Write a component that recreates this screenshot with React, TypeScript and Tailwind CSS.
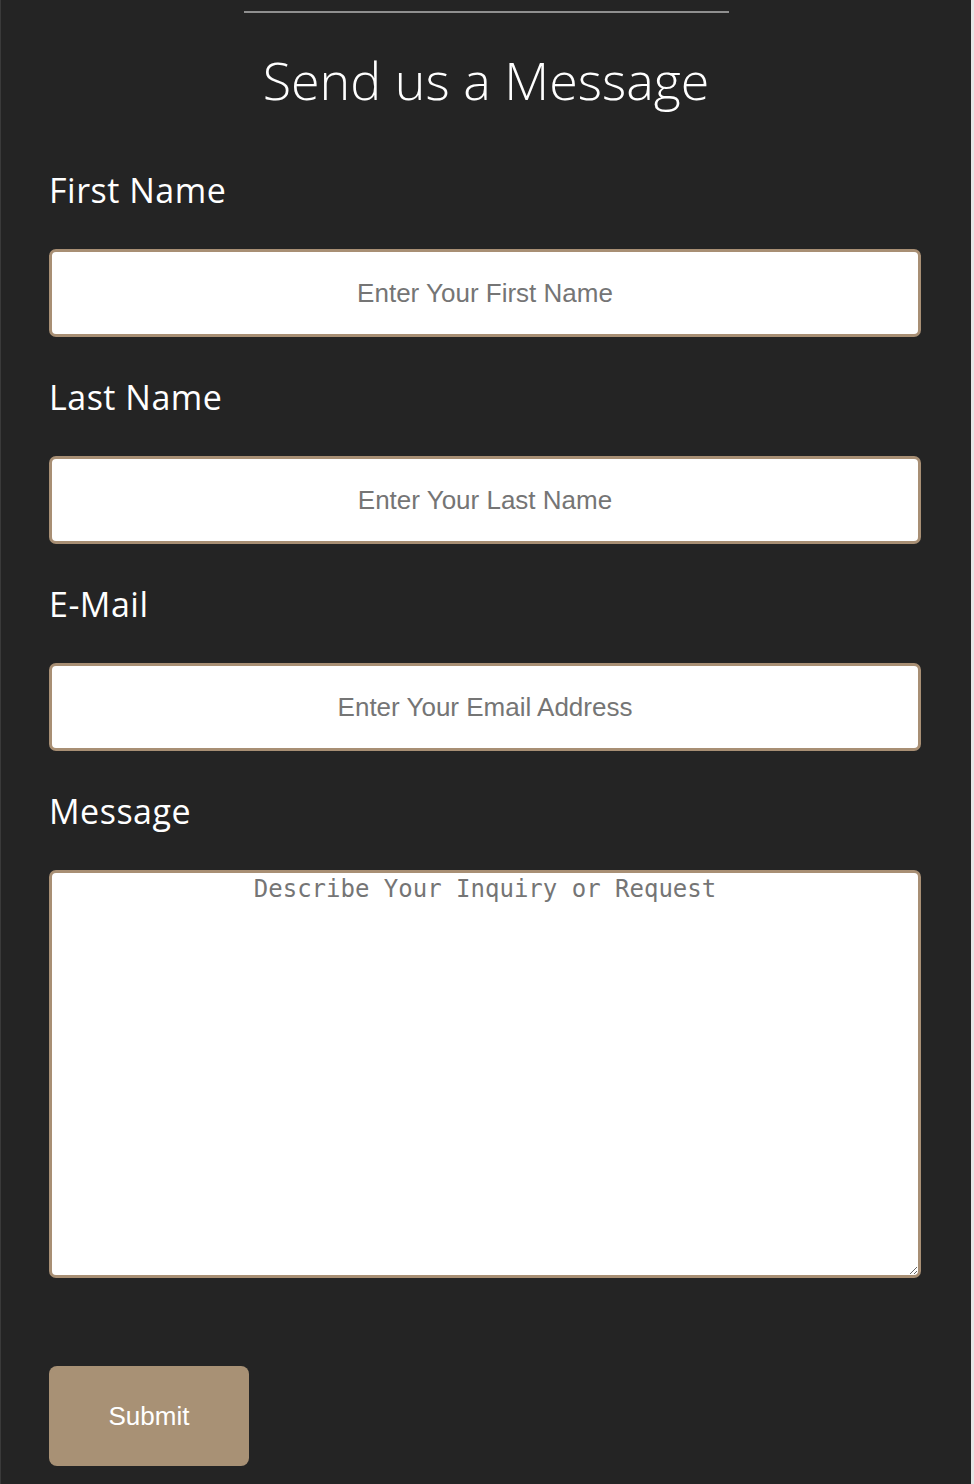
import React from 'react';

const labelFont = { fontFamily: '"Open Sans", "Noto Sans", sans-serif' };

interface FieldProps {
  label: string;
  placeholder: string;
  type?: string;
}

function Field({ label, placeholder, type = 'text' }: FieldProps) {
  return (
    <div className="flex flex-col">
      <label className="h-[40px] text-[34px] leading-[40px] tracking-[0.5px] text-white font-['Open_Sans',sans-serif]">
        {label}
      </label>
      <input
        type={type}
        placeholder={placeholder}
        className="mt-[39px] mb-[40px] h-[88px] w-full rounded-[7px] border-[3px] border-[#a88f74] bg-white text-center text-[26px] text-[#333] placeholder:text-[#757575] font-['Liberation_Sans',Arial,sans-serif] outline-none"
      />
    </div>
  );
}

export default function App() {
  return (
    <div className="flex min-h-[1484px] w-full bg-[#e6e6e6]">
      <div className="w-[971px] border-l border-[#3a3a3a] bg-[#242424]">
        <div className="mx-auto mt-[11px] h-[2px] w-[485px] bg-[#8f8f8f]" />
        <h2
          className="mt-[37px] h-[60px] text-center text-[52px] font-light leading-[60px] text-white"
          style={labelFont}
        >
          Send us a Message
        </h2>
        <form className="mt-[60px] pl-[48px] pr-[50px]" onSubmit={(e) => e.preventDefault()}>
          <Field label="First Name" placeholder="Enter Your First Name" />
          <Field label="Last Name" placeholder="Enter Your Last Name" />
          <Field label="E-Mail" placeholder="Enter Your Email Address" type="email" />
          <div className="flex flex-col">
            <label className="h-[40px] text-[34px] leading-[40px] tracking-[0.5px] text-white font-['Open_Sans',sans-serif]">
              Message
            </label>
            <textarea
              placeholder="Describe Your Inquiry or Request"
              className="mt-[39px] h-[408px] w-full resize-y rounded-[7px] border-[3px] border-[#a88f74] bg-white px-[2px] pt-[3px] text-center text-[24px] leading-[26px] text-[#333] placeholder:text-[#757575] font-['DejaVu_Sans_Mono',monospace] outline-none"
            />
          </div>
          <button
            type="submit"
            className="mt-[88px] h-[100px] w-[200px] rounded-[8px] bg-[#a89175] text-[26px] text-white font-['Liberation_Sans',Arial,sans-serif]"
          >
            Submit
          </button>
        </form>
      </div>
    </div>
  );
}
